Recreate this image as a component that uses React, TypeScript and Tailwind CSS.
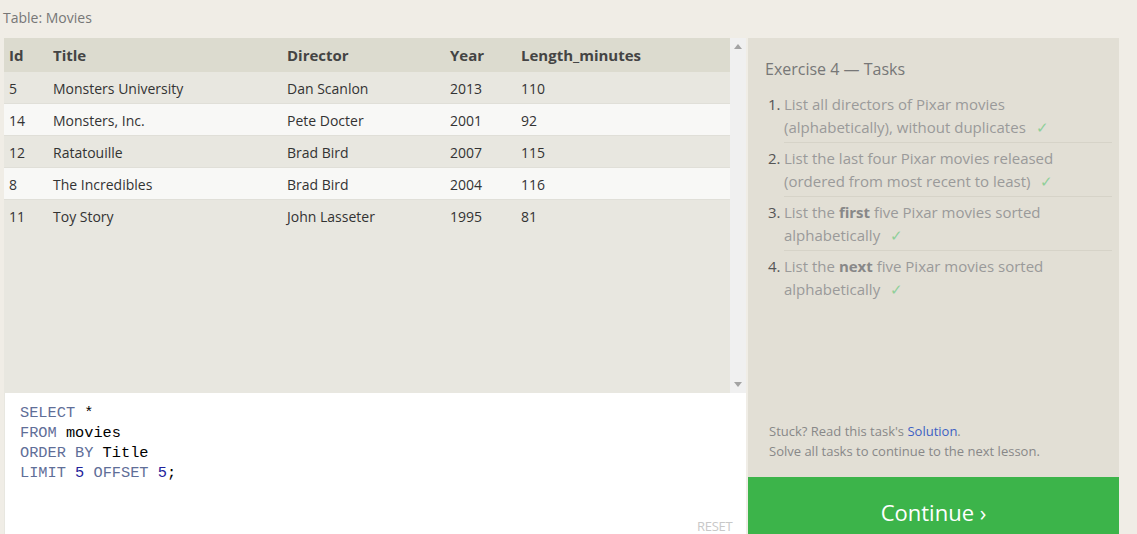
import React from "react";

const rows = [
  ["5", "Monsters University", "Dan Scanlon", "2013", "110"],
  ["14", "Monsters, Inc.", "Pete Docter", "2001", "92"],
  ["12", "Ratatouille", "Brad Bird", "2007", "115"],
  ["8", "The Incredibles", "Brad Bird", "2004", "116"],
  ["11", "Toy Story", "John Lasseter", "1995", "81"],
];

const cols = ["w-[44px]", "w-[234px]", "w-[163px]", "w-[71px]", "flex-1"];

function Check() {
  return <span className="ml-[10px] text-[#8fcf9a]">✓</span>;
}

export default function App() {
  return (
    <div className="h-[534px] overflow-hidden bg-[#f0ede6] font-['Open_Sans',sans-serif]">
      <div className="pl-[3px] pt-[8px] text-[14px] leading-[20px] text-[#777]">Table: Movies</div>
      <div className="mt-[10px] flex pl-[4px]">
        <div className="flex w-[742px] flex-col">
          <div className="flex h-[355px]">
            <div className="flex-1 bg-[#e8e7e0] text-[14px] text-[#333]">
              <div className="flex h-[34px] items-center bg-[#dcdbcf] text-[15px] font-bold text-[#444]">
                {["Id", "Title", "Director", "Year", "Length_minutes"].map((h, i) => (
                  <div key={h} className={`${cols[i]} pl-[5px]`}>{h}</div>
                ))}
              </div>
              {rows.map((r, ri) => (
                <div
                  key={ri}
                  className={`flex h-[32px] items-center pt-[1px] ${ri < 4 ? "border-b border-[#e0dfd8]" : ""} ${ri % 2 === 1 ? "bg-[#f8f8f6]" : ""}`}
                >
                  {r.map((c, i) => (
                    <div key={i} className={`${cols[i]} pl-[5px]`}>{c}</div>
                  ))}
                </div>
              ))}
            </div>
            <div className="flex w-[16px] flex-col items-center justify-between bg-[#f0f0f0] py-[6px] text-[#a3a3a3]">
              <svg width="8" height="5" viewBox="0 0 8 5"><path d="M4 0 L8 5 L0 5 Z" fill="currentColor" /></svg>
              <svg width="8" height="5" viewBox="0 0 8 5"><path d="M0 0 L8 0 L4 5 Z" fill="currentColor" /></svg>
            </div>
          </div>
          <div className="relative h-[160px] border-l border-[#e8e7e0] bg-white pl-[15px] pt-[10px] font-['Liberation_Mono',monospace] text-[15.3px] leading-[20px] text-black">
            <div><span className="text-[#5f6e98]">SELECT</span> *</div>
            <div><span className="text-[#5f6e98]">FROM</span> movies</div>
            <div><span className="text-[#5f6e98]">ORDER BY</span> Title</div>
            <div>
              <span className="text-[#5f6e98]">LIMIT</span> <span className="text-[#22229a]">5</span>{" "}
              <span className="text-[#5f6e98]">OFFSET</span> <span className="text-[#22229a]">5</span>;
            </div>
            <div className="absolute left-[692px] top-[124px] font-['Open_Sans',sans-serif] text-[13px] leading-[18px] tracking-[-0.3px] text-[#c8c8c8]">RESET</div>
          </div>
        </div>
        <div className="ml-[2px] flex w-[371px] flex-col">
          <div className="flex h-[439px] flex-col bg-[#e2dfd5] pl-[17px] pr-[7px]">
            <div className="pt-[20px] text-[16px] leading-[22px] text-[#777]">Exercise 4 — Tasks</div>
            <ol className="mt-[9px] pl-[3px] text-[15px] leading-[23px] text-[#9a9a9a]">
              {[
                <>List all directors of Pixar movies (alphabetically), without duplicates<Check /></>,
                <>List the last four Pixar movies released (ordered from most recent to least)<Check /></>,
                <>List the <b className="text-[#888]">first</b> five Pixar movies sorted alphabetically<Check /></>,
                <>List the <b className="text-[#888]">next</b> five Pixar movies sorted alphabetically<Check /></>,
              ].map((t, i) => (
                <li key={i} className="flex">
                  <span className="w-[16px] shrink-0 pt-[4px] text-[#555]">{i + 1}.</span>
                  <div className={`flex-1 pr-[40px] pb-[3px] pt-[4px] ${i < 3 ? "border-b border-[#d6d3c8]" : ""}`}>{t}</div>
                </li>
              ))}
            </ol>
            <div className="mt-auto pb-[16px] pl-[4px] text-[13px] leading-[20px] text-[#888]">
              <div>
                Stuck? Read this task's <span className="text-[#3d5fc4]">Solution</span>.
              </div>
              <div>Solve all tasks to continue to the next lesson.</div>
            </div>
          </div>
          <div className="flex h-[70px] items-start justify-center bg-[#3cb44a] pt-[20px] text-[22px] leading-[30px] text-white">
            Continue ›
          </div>
        </div>
      </div>
    </div>
  );
}
